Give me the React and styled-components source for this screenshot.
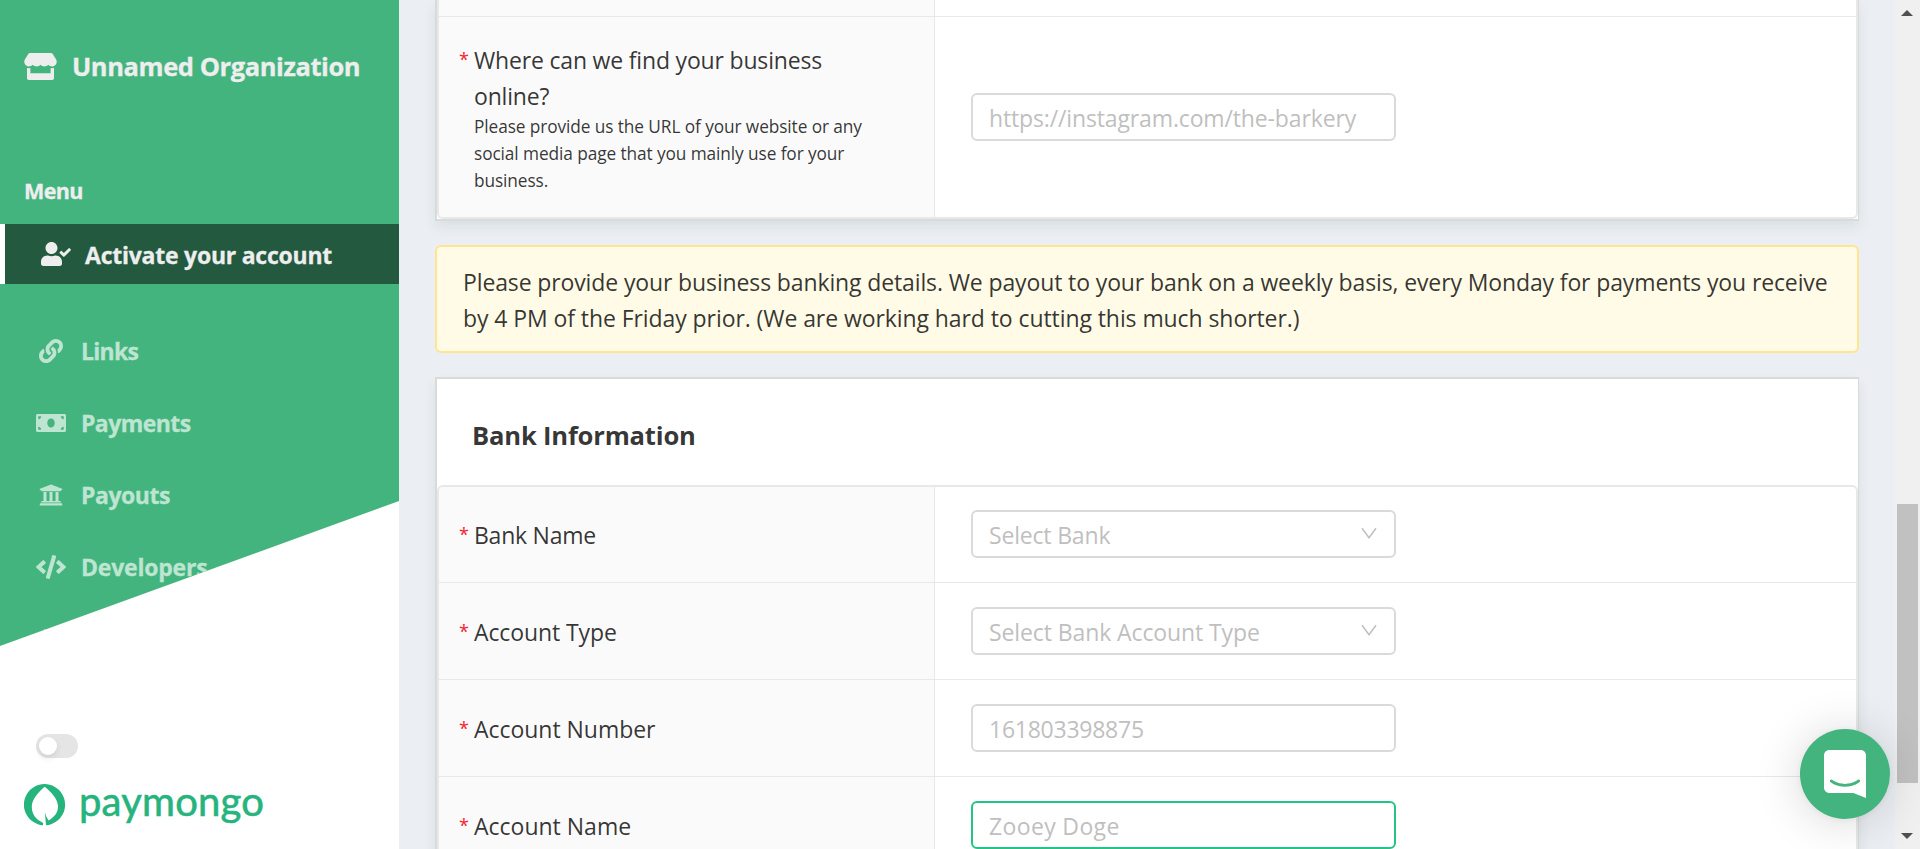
import React from 'react';
import styled, { createGlobalStyle } from 'styled-components';
import { FaStore, FaUserCheck, FaLink, FaMoneyBill, FaUniversity, FaCode, FaUserCog } from 'react-icons/fa';

const GlobalStyle = createGlobalStyle`
  * { box-sizing: border-box; }
  body {
    margin: 0;
    overflow: hidden;
    font-family: "Open Sans", "Noto Sans", sans-serif;
    color: rgba(0, 0, 0, 0.8);
  }
`;

const Page = styled.div`
  display: flex;
  height: 849px;
  overflow: hidden;
  background: #ebeff4;
`;

/* Sidebar */
const Sidebar = styled.aside`
  flex: none;
  display: grid;
  width: 399px;
  height: 849px;
  background: #fff;
  > * { grid-area: 1 / 1; }
`;

const SlantedPanel = styled.div`
  height: 646px;
  background: #44b47f;
  color: #eee;
  clip-path: polygon(0 0, 100% 0, 100% 501px, 0 646px);
`;

const Organization = styled.div`
  display: flex;
  align-items: center;
  gap: 15px;
  height: 132px;
  padding-left: 24px;
  font-size: 25.5px;
  font-weight: 700;
  letter-spacing: -0.42px;
  -webkit-text-stroke: 0.3px currentColor;
  white-space: nowrap;
  svg { width: 33px; height: 27px; }
`;

const MenuTitle = styled.div`
  height: 92px;
  padding: 41px 0 0 24px;
  font-size: 21.5px;
  font-weight: 700;
  line-height: 36px;
  letter-spacing: -0.6px;
  -webkit-text-stroke: 0.3px currentColor;
`;

const NavItem = styled.a`
  display: flex;
  align-items: center;
  height: ${(p) => (p.$active ? 60 : 72)}px;
  padding-top: ${(p) => (p.$lowered ? 3 : 0)}px;
  padding-left: 36px;
  border-left: ${(p) => (p.$active ? '5px solid #fff' : '0')};
  background: ${(p) => (p.$active ? '#22593f' : 'transparent')};
  margin-bottom: ${(p) => (p.$active ? 31 : 0)}px;
  color: ${(p) => (p.$active ? '#eee' : '#bee5d1')};
  font-size: 23px;
  font-weight: 700;
  letter-spacing: ${(p) => p.$tracking || 0}px;
  -webkit-text-stroke: 0.3px currentColor;
  white-space: nowrap;
  svg {
    flex: none;
    width: 30px;
    height: 24px;
    margin-right: ${(p) => (p.$active ? 14 : 15)}px;
    stroke: none;
  }
`;

const NavLabel = styled.span`
  padding-top: ${(p) => (p.$active ? 2 : 0)}px;
`;

const SidebarFooter = styled.div`
  align-self: end;
  display: flex;
  flex-direction: column;
  height: 115px;
`;

const Toggle = styled.span`
  width: 42px;
  height: 24px;
  margin-left: 36px;
  padding: 3px;
  border-radius: 12px;
  background: #e5e5e5;
  &::before {
    content: '';
    display: block;
    width: 18px;
    height: 18px;
    border-radius: 50%;
    background: #fff;
    box-shadow: 0 3px 6px rgba(0, 35, 11, 0.1);
  }
`;

const Brand = styled.div`
  display: flex;
  align-items: flex-start;
  gap: 13px;
  padding: 26px 0 0 24px;
  color: #25b37e;
  svg { flex: none; }
`;

const Wordmark = styled.span`
  font-family: Lato, sans-serif;
  font-size: 40px;
  line-height: 40px;
  letter-spacing: 0.2px;
  margin-top: -3px;
  -webkit-text-stroke: 0.6px currentColor;
`;

/* Main column */
const Main = styled.main`
  flex: 1;
  display: flex;
  flex-direction: column;
  padding: 0 36px;
`;

const Card = styled.section`
  flex: none;
  margin-bottom: ${(p) => (p.$last ? 0 : 24)}px;
  border: solid #d9dbda;
  border-width: ${(p) => (p.$first ? '0 1px 2px 2px' : '2px 1px 2px 2px')};
  background: #fff;
  box-shadow: 0 6px 12px rgba(10, 50, 10, 0.08);
`;

const CardTitle = styled.h2`
  height: 106px;
  margin: 0;
  padding: 37px 0 0 35px;
  font-size: 25.6px;
  font-weight: 700;
  line-height: 40px;
  letter-spacing: -0.2px;
`;

const Table = styled.div`
  border: 2px solid #e8e8e8;
  border-top-width: ${(p) => (p.$cut ? 0 : 2)}px;
  border-radius: ${(p) => (p.$cut ? '0 0 6px 6px' : '6px')};
  overflow: hidden;
`;

const Row = styled.div`
  display: grid;
  grid-template-columns: 496px 1fr;
  height: ${(p) => p.$height}px;
  & + & { border-top: 1px solid #e8e8e8; }
`;

const LabelCell = styled.div`
  display: flex;
  align-items: center;
  padding: 1px 60px 0 20px;
  border-right: 1px solid #e8e8e8;
  background: #fafafa;
`;

const Label = styled.label`
  display: grid;
  grid-template-columns: 15px auto;
  font-size: 23px;
  line-height: 36px;
  letter-spacing: ${(p) => p.$tracking}px;
  white-space: pre;
  &::before {
    content: '*';
    color: #f5222d;
    font-size: 18px;
    letter-spacing: 0;
    line-height: 34px;
  }
`;

const Hint = styled.small`
  display: block;
  margin-top: -1px;
  font-size: 17.3px;
  line-height: 27px;
  letter-spacing: -0.1px;
`;

const ValueCell = styled.div`
  display: flex;
  align-items: center;
  padding-left: 36px;
  padding-bottom: ${(p) => (p.$tight ? 1 : 0)}px;
`;

const Field = styled.div`
  display: flex;
  align-items: center;
  justify-content: space-between;
  width: 425px;
  height: 48px;
  padding: 2px 16px 0 16px;
  border: 2px solid ${(p) => (p.$focused ? '#23c486' : '#dadada')};
  border-radius: 6px;
  background: #fff;
  color: #bfbfbf;
  font-size: 23px;
  letter-spacing: ${(p) => p.$tracking}px;
  white-space: nowrap;
`;

const Chevron = styled.svg`
  flex: none;
  width: 18px;
  height: 18px;
  margin-top: -5px;
`;

const Notice = styled.div`
  flex: none;
  height: 108px;
  margin-bottom: 24px;
  padding: 17px 0 0 26px;
  border: 2px solid #ffe58f;
  border-radius: 6px;
  background: #fffbe6;
  font-size: 23px;
  line-height: 36px;
  white-space: nowrap;
`;

const NoticeLine = styled.div`
  letter-spacing: ${(p) => p.$tracking}px;
`;

/* Scrollbar */
const Scrollbar = styled.div`
  flex: none;
  display: flex;
  flex-direction: column;
  align-items: center;
  justify-content: space-between;
  width: 25px;
  height: 849px;
  padding: 10px 1px 10px 0;
  background: #f0f0f0;
`;

const Arrow = styled.span`
  width: 0;
  height: 0;
  margin-left: -1px;
  border: solid transparent;
  border-width: ${(p) => (p.$up ? '0 6px 6px' : '6px 6px 0')};
  border-${(p) => (p.$up ? 'bottom' : 'top')}-color: #505050;
`;

const Thumb = styled.span`
  width: 21px;
  height: 279px;
  margin: 488px 0 50px;
  background: #c1c1c1;
`;

const Launcher = styled.button`
  position: fixed;
  right: 30px;
  bottom: 30px;
  display: flex;
  align-items: center;
  justify-content: center;
  width: 90px;
  height: 90px;
  padding: 0;
  border: 0;
  border-radius: 50%;
  background: #44b47f;
  box-shadow: 0 1px 9px rgba(0, 0, 0, 0.06), 0 3px 48px rgba(0, 0, 0, 0.16);
`;

const NAV = [
  { label: 'Links', icon: FaLink, tracking: -0.7 },
  { label: 'Payments', icon: FaMoneyBill, tracking: -0.58 },
  { label: 'Payouts', icon: FaUniversity, tracking: -0.45 },
  { label: 'Developers', icon: FaCode, tracking: -0.22 },
];

const BANK_ROWS = [
  { label: 'Bank Name', tracking: -0.24, value: 'Select Bank', valueTracking: -0.18, select: true },
  { label: 'Account Type', tracking: -0.1, value: 'Select Bank Account Type', valueTracking: -0.1, select: true },
  { label: 'Account Number', tracking: -0.03, value: '161803398875', valueTracking: -0.25 },
  { label: 'Account Name', tracking: 0, value: 'Zooey Doge', valueTracking: 0.35, focused: true },
];

function DownArrow() {
  return (
    <Chevron viewBox="0 0 18 18" fill="none" stroke="#bfbfbf" strokeWidth="1.5">
      <path d="M2 4.3 L9 13.7 L16 4.3" />
    </Chevron>
  );
}

function Leaf() {
  return (
    <svg width="42" height="42" viewBox="0 0 42 42" fill="currentColor">
      <path d="M19 41.2 A20.6 20.6 0 1 1 22 41.2 L20.9 28.2 Q22 33 24.6 36.4 C30 33.5 34 29 34 22.6 C34 15 27 8 20.7 2.8 C14.5 8 7.8 15.5 7.8 22.6 C7.8 31 12.5 35.8 19.2 39 Z" />
    </svg>
  );
}

function ChatIcon() {
  return (
    <svg width="42" height="48" viewBox="0 0 28 32" fill="#fff">
      <path d="M28 32s-4.714-1.855-8.527-3.34H3.437C1.54 28.66 0 27.026 0 25.013V3.644C0 1.633 1.54 0 3.437 0h21.125c1.898 0 3.437 1.632 3.437 3.645v18.404H28V32zm-4.139-11.982a.88.88 0 00-1.292-.105c-.03.026-3.015 2.681-8.57 2.681-5.486 0-8.517-2.636-8.571-2.684a.88.88 0 00-1.29.107 1.01 1.01 0 00-.219.708.992.992 0 00.318.664c.142.128 3.537 3.15 9.762 3.15 6.226 0 9.621-3.022 9.763-3.15a.992.992 0 00.317-.664 1.01 1.01 0 00-.218-.707z" />
    </svg>
  );
}

export default function App() {
  return (
    <Page>
      <GlobalStyle />
      <Sidebar>
        <SlantedPanel>
          <Organization><FaStore />Unnamed Organization</Organization>
          <MenuTitle>Menu</MenuTitle>
          <NavItem $active $tracking={-0.24}><FaUserCheck /><NavLabel $active>Activate your account</NavLabel></NavItem>
          {NAV.map(({ label, icon: Icon, tracking }) => (
            <NavItem key={label} $tracking={tracking}><Icon /><NavLabel>{label}</NavLabel></NavItem>
          ))}
          <NavItem $lowered><FaUserCog /></NavItem>
        </SlantedPanel>
        <SidebarFooter>
          <Toggle />
          <Brand><Leaf /><Wordmark>paymongo</Wordmark></Brand>
        </SidebarFooter>
      </Sidebar>

      <Main>
        <Card $first>
          <Table $cut>
            <Row $height={16}><LabelCell /><ValueCell /></Row>
            <Row $height={201}>
              <LabelCell>
                <Label $tracking={-0.18}>
                  <span>
                    {'Where can we find your business\nonline?'}
                    <Hint>{'Please provide us the URL of your website or any\nsocial media page that you mainly use for your\nbusiness.'}</Hint>
                  </span>
                </Label>
              </LabelCell>
              <ValueCell><Field $tracking={-0.14}>https://instagram.com/the-barkery</Field></ValueCell>
            </Row>
          </Table>
        </Card>

        <Notice>
          <NoticeLine $tracking={-0.124}>Please provide your business banking details. We payout to your bank on a weekly basis, every Monday for payments you receive</NoticeLine>
          <NoticeLine $tracking={-0.08}>by 4 PM of the Friday prior. (We are working hard to cutting this much shorter.)</NoticeLine>
        </Notice>

        <Card $last>
          <CardTitle>Bank Information</CardTitle>
          <Table>
            {BANK_ROWS.map((row, i) => (
              <Row key={row.label} $height={i === 0 ? 95 : 97}>
                <LabelCell><Label $tracking={row.tracking}>{row.label}</Label></LabelCell>
                <ValueCell $tight={i === 0}>
                  <Field $tracking={row.valueTracking} $focused={row.focused}>
                    {row.value}
                    {row.select && <DownArrow />}
                  </Field>
                </ValueCell>
              </Row>
            ))}
          </Table>
        </Card>
      </Main>

      <Scrollbar>
        <Arrow $up />
        <Thumb />
        <Arrow />
      </Scrollbar>
      <Launcher><ChatIcon /></Launcher>
    </Page>
  );
}
